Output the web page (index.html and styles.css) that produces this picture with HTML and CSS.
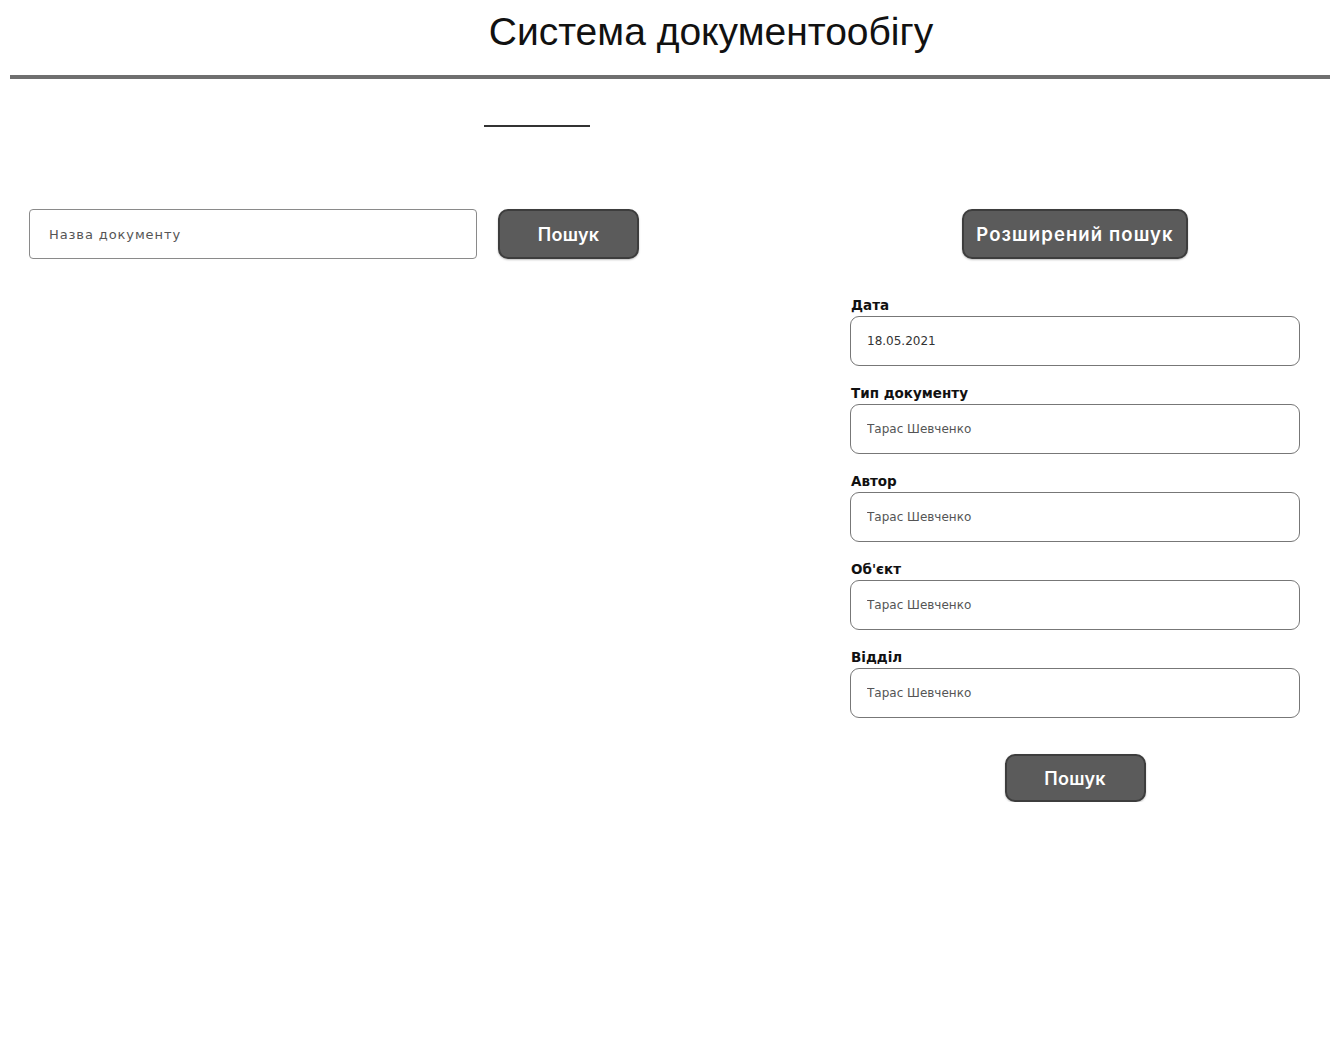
FILE: index.html
```html
<!DOCTYPE html>
<html lang="uk">
<head>
<meta charset="utf-8">
<title>Система документообігу</title>
<link rel="stylesheet" href="styles.css">
</head>
<body>
<header class="site-header">
  <h1 class="site-title">Система документообігу</h1>
</header>
<nav class="tabs"><span class="tab-mark"></span></nav>
<main class="search-layout">
  <section class="quick-search">
    <input class="text-field" type="text" placeholder="Назва документу">
    <button class="btn" type="button">Пошук</button>
  </section>
  <section class="advanced-search">
    <button class="btn btn-wide" type="button">Розширений пошук</button>
    <form class="filters">
      <label class="field">
        <span class="field-label">Дата</span>
        <input class="field-input" type="text" value="18.05.2021">
      </label>
      <label class="field">
        <span class="field-label">Тип документу</span>
        <input class="field-input" type="text" placeholder="Тарас Шевченко">
      </label>
      <label class="field">
        <span class="field-label">Автор</span>
        <input class="field-input" type="text" placeholder="Тарас Шевченко">
      </label>
      <label class="field">
        <span class="field-label">Об'єкт</span>
        <input class="field-input" type="text" placeholder="Тарас Шевченко">
      </label>
      <label class="field">
        <span class="field-label">Відділ</span>
        <input class="field-input" type="text" placeholder="Тарас Шевченко">
      </label>
      <button class="btn btn-submit" type="button">Пошук</button>
    </form>
  </section>
</main>
</body>
</html>
```

FILE: styles.css
```css
html, body {
  margin: 0;
  padding: 0;
  background: #fff;
  color: #111;
  font-family: "Liberation Sans", Arial, sans-serif;
}

.site-header {
  margin-left: 10px;
  border-bottom: 4px solid #6f6f6f;
  padding-top: 9px;
  box-sizing: border-box;
  height: 79px;
}

.site-title {
  margin: 0;
  padding-left: 82px;
  text-align: center;
  font-family: "Liberation Sans", Arial, sans-serif;
  font-weight: 400;
  font-size: 39px;
  line-height: 46px;
  color: #111;
}

.tabs {
  height: 50px;
  padding-left: 484px;
  box-sizing: border-box;
  display: flex;
  align-items: flex-end;
}

.tab-mark {
  display: block;
  width: 106px;
  height: 2px;
  background: #333;
  margin-bottom: 2px;
}

.search-layout {
  display: flex;
  padding-top: 80px;
}

.quick-search {
  display: flex;
  align-items: flex-start;
  gap: 21px;
  padding-left: 29px;
  width: 850px;
  box-sizing: border-box;
}

.text-field {
  width: 448px;
  height: 50px;
  box-sizing: border-box;
  border: 1px solid #8a8a8a;
  border-radius: 4px;
  padding: 0 19px;
  font-family: "DejaVu Sans", sans-serif;
  font-size: 13px;
  letter-spacing: 0.9px;
  color: #333;
  outline: none;
}

.text-field::placeholder,
.field-input::placeholder {
  color: #555;
}

.btn {
  height: 50px;
  width: 141px;
  box-sizing: border-box;
  border: 2px solid #3d3d3d;
  border-radius: 10px;
  background: #5b5b5b;
  color: #fff;
  font-family: Inter, "Liberation Sans", sans-serif;
  font-weight: 600;
  font-size: 18px;
  letter-spacing: 0.3px;
  padding: 0;
  cursor: pointer;
  box-shadow: 0 1px 2px rgba(0, 0, 0, 0.25);
}

.advanced-search {
  width: 450px;
  display: flex;
  flex-direction: column;
  align-items: center;
}

.btn-wide {
  width: 226px;
  font-size: 18.5px;
  letter-spacing: 1.1px;
}

.filters {
  width: 100%;
  display: flex;
  flex-direction: column;
  gap: 19px;
  margin-top: 38px;
}

.field {
  display: flex;
  flex-direction: column;
  gap: 3px;
}

.field-label {
  font-family: "DejaVu Sans", sans-serif;
  font-weight: 700;
  font-size: 13.5px;
  line-height: 16px;
  padding-left: 1px;
  color: #111;
}

.field-input {
  height: 50px;
  box-sizing: border-box;
  border: 1.5px solid #777;
  border-radius: 9px;
  padding: 0 16px;
  font-family: "DejaVu Sans", sans-serif;
  font-size: 12px;
  color: #333;
  outline: none;
}

.btn-submit {
  align-self: center;
  margin-top: 17px;
  height: 48px;
}
```
